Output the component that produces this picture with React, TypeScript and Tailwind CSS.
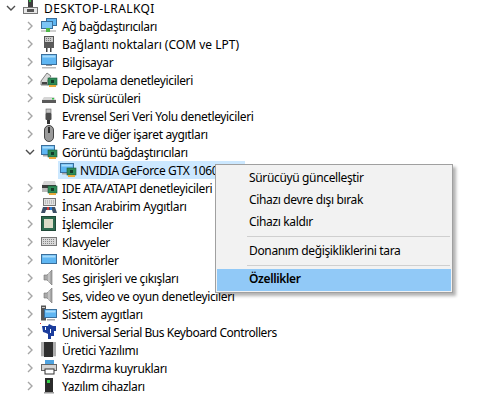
import React from "react";

const Card = ({ x = 8, y = 7 }: { x?: number; y?: number }) => (
  <g transform={`translate(${x} ${y})`}>
    <rect x="0" y="0" width="9" height="7" fill="#2e8b57" stroke="#1d5c3a" strokeWidth="0.6" />
    <rect x="3" y="2" width="3" height="3" fill="#123c28" />
    <rect x="1" y="7" width="7" height="2" fill="#e8a93a" />
  </g>
);

const Monitor = ({ x = 1, y = 2, w = 14, h = 9 }: { x?: number; y?: number; w?: number; h?: number }) => (
  <g>
    <rect x={x} y={y} width={w} height={h} fill="#5fb6f2" stroke="#3b6f9c" />
    <rect x={x + 1} y={y + 1} width={w - 2} height={2} fill="#a8dcfb" />
  </g>
);

const Svg = ({ children }: { children: React.ReactNode }) => (
  <svg width="18" height="18" viewBox="0 0 18 18" className="shrink-0">
    {children}
  </svg>
);

const icons: Record<string, React.ReactNode> = {
  computer: (
    <Svg>
      <rect x="6" y="0" width="5" height="8" fill="#3f3f3f" />
      <rect x="7" y="1" width="2" height="2" fill="#39b54a" />
      <rect x="1.5" y="8.5" width="14" height="6" fill="#e6e6e6" stroke="#777" />
      <rect x="5" y="10" width="7" height="3" fill="#555" />
    </Svg>
  ),
  network: (
    <Svg>
      <rect x="6.5" y="1.5" width="10" height="7" fill="#5fb6f2" stroke="#3b6f9c" />
      <rect x="1.5" y="4.5" width="11" height="7" fill="#7cc6f7" stroke="#3b6f9c" />
      <rect x="1" y="13" width="15" height="2" fill="#cfcfcf" />
      <rect x="6" y="11" width="4" height="4" fill="#4fb848" />
    </Svg>
  ),
  port: (
    <Svg>
      <rect x="4.5" y="1.5" width="9" height="6" fill="#c9c9c9" stroke="#555" />
      <path d="M6 3.5 H12 M6 5.5 H12" stroke="#777" strokeDasharray="1 1" />
      <rect x="4" y="8" width="10" height="5" fill="#5a5a5a" />
      <rect x="6" y="13" width="1.5" height="4" fill="#444" />
      <rect x="10" y="13" width="1.5" height="4" fill="#444" />
    </Svg>
  ),
  pc: (
    <Svg>
      <Monitor x={1.5} y={1.5} w={15} h={10} />
      <rect x="6" y="12" width="6" height="1" fill="#999" />
      <rect x="2" y="14" width="14" height="1.5" fill="#bbb" />
    </Svg>
  ),
  storage: (
    <Svg>
      <path d="M1 10 L7 2 L11 5 L8 9 L8 14 L1 14 Z" fill="#d9d9d9" stroke="#666" strokeWidth="0.8" />
      <rect x="2" y="11" width="5" height="2.5" fill="#444" />
      <Card x={8} y={7} />
    </Svg>
  ),
  disk: (
    <Svg>
      <path d="M4 8 H14 L16 11 H2 Z" fill="#d6d6d6" />
      <rect x="2" y="11" width="14" height="3" fill="#5a5a5a" />
      <rect x="12" y="9" width="2" height="1.5" fill="#35c24a" />
    </Svg>
  ),
  usb: (
    <Svg>
      <rect x="6" y="2" width="5" height="4" fill="#c4c4c4" stroke="#666" strokeWidth="0.6" />
      <rect x="5.5" y="6" width="6" height="7" rx="1" fill="#4d4d4d" />
      <rect x="7" y="13" width="3" height="4" fill="#333" />
    </Svg>
  ),
  mouse: (
    <Svg>
      <rect x="4.5" y="0.5" width="9" height="16" rx="4.5" fill="#9a9a9a" stroke="#444" />
      <rect x="8" y="2" width="2" height="6" fill="#2c2c2c" />
    </Svg>
  ),
  display: (
    <Svg>
      <Monitor x={1.5} y={2.5} w={13} h={9} />
      <rect x="3" y="12" width="8" height="1.5" fill="#aaa" />
      <Card x={8} y={7} />
    </Svg>
  ),
  ide: (
    <Svg>
      <path d="M4 2 H15 L16 6 H2 Z" fill="#d5d5d5" />
      <rect x="2" y="6" width="14" height="3" fill="#3c3c3c" />
      <rect x="2" y="9" width="6" height="4" fill="#bbb" />
      <Card x={8} y={7} />
    </Svg>
  ),
  hid: (
    <Svg>
      <rect x="3.5" y="1.5" width="12" height="7" fill="#e2e2e2" stroke="#777" />
      <path d="M5 4 H14 M5 6 H14" stroke="#999" strokeDasharray="1 1" />
      <path d="M1 16 L3 10 H15 L17 16 H13 L12 13 H6 L5 16 Z" fill="#3d4f66" />
      <rect x="7" y="10" width="2" height="3" fill="#d23b3b" />
      <rect x="10" y="10" width="2" height="3" fill="#2f7ed8" />
    </Svg>
  ),
  cpu: (
    <Svg>
      <rect x="1.5" y="1.5" width="14" height="14" fill="#2d6a4f" stroke="#1f4937" />
      <rect x="4" y="4" width="9" height="9" fill="#dcdcc8" />
    </Svg>
  ),
  keyboard: (
    <Svg>
      <rect x="1.5" y="4.5" width="15" height="8" fill="#d9d9d9" stroke="#777" />
      <path d="M3 6.5 H15 M3 8.5 H15 M3 10.5 H15" stroke="#888" strokeDasharray="1 1" />
    </Svg>
  ),
  monitor: (
    <Svg>
      <Monitor x={1.5} y={3.5} w={15} h={9} />
    </Svg>
  ),
  speaker: (
    <Svg>
      <path d="M4 6 H7 L12 1 V16 L7 11 H4 Z" fill="#a9a9a9" stroke="#6f6f6f" strokeWidth="0.6" />
      <path d="M9 3.5 V13.5" stroke="#dcdcdc" />
    </Svg>
  ),
  system: (
    <Svg>
      <rect x="1" y="0.5" width="5" height="15" fill="#555" />
      <rect x="2" y="2" width="3" height="1" fill="#ccc" />
      <Monitor x={4.5} y={4.5} w={12} h={8} />
      <rect x="7" y="14" width="8" height="1.5" fill="#aaa" />
    </Svg>
  ),
  serial: (
    <Svg>
      <path d="M2 3 H8 L9 1 L13 3 L16 3 V8 L14 8 V13 H11 V16 H8 V11 L6 10 L3 9 Z" fill="#1b3c9c" />
      <rect x="5" y="4" width="1" height="3" fill="#fff" />
      <rect x="10" y="6" width="1" height="4" fill="#fff" />
      <rect x="0" y="0" width="1" height="1" fill="#e03030" />
    </Svg>
  ),
  chip: (
    <Svg>
      <rect x="1" y="1" width="15" height="15" fill="#e8e8e8" />
      <path d="M1 2 H16 M1 4 H16 M1 6 H16 M1 8 H16 M1 10 H16 M1 12 H16 M1 14 H16" stroke="#555" strokeWidth="0.8" />
      <rect x="4" y="1" width="9" height="15" fill="#2f2f2f" />
    </Svg>
  ),
  printer: (
    <Svg>
      <rect x="5" y="1" width="9" height="4" fill="#4fa3e0" />
      <rect x="1.5" y="5.5" width="15" height="6" fill="#d4d4d4" stroke="#666" />
      <rect x="5" y="10" width="9" height="5" fill="#fff" stroke="#333" />
    </Svg>
  ),
  software: (
    <Svg>
      <rect x="5" y="1" width="8" height="15" fill="#2b2b2b" />
      <rect x="7" y="3" width="3" height="3" fill="#35d14a" />
      <rect x="4" y="15" width="10" height="1.5" fill="#999" />
    </Svg>
  ),
};

type Row = { label: string; icon: string; open?: boolean; level: number; tracking?: string };

const rows: Row[] = [
  { label: "DESKTOP-LRALKQI", icon: "computer", open: true, level: 0, tracking: "tracking-[0.4px]" },
  { label: "Ağ bağdaştırıcıları", icon: "network", level: 1 },
  { label: "Bağlantı noktaları (COM ve LPT)", icon: "port", level: 1, tracking: "tracking-[0px]" },
  { label: "Bilgisayar", icon: "pc", level: 1 },
  { label: "Depolama denetleyicileri", icon: "storage", level: 1 },
  { label: "Disk sürücüleri", icon: "disk", level: 1 },
  { label: "Evrensel Seri Veri Yolu denetleyicileri", icon: "usb", level: 1 },
  { label: "Fare ve diğer işaret aygıtları", icon: "mouse", level: 1 },
  { label: "Görüntü bağdaştırıcıları", icon: "display", open: true, level: 1 },
  { label: "NVIDIA GeForce GTX 1060 6GB", icon: "display", level: 2 },
  { label: "IDE ATA/ATAPI denetleyicileri", icon: "ide", level: 1 },
  { label: "İnsan Arabirim Aygıtları", icon: "hid", level: 1 },
  { label: "İşlemciler", icon: "cpu", level: 1 },
  { label: "Klavyeler", icon: "keyboard", level: 1 },
  { label: "Monitörler", icon: "monitor", level: 1 },
  { label: "Ses girişleri ve çıkışları", icon: "speaker", level: 1 },
  { label: "Ses, video ve oyun denetleyicileri", icon: "speaker", level: 1 },
  { label: "Sistem aygıtları", icon: "system", level: 1 },
  { label: "Universal Serial Bus Keyboard Controllers", icon: "serial", level: 1, tracking: "tracking-[-0.45px]" },
  { label: "Üretici Yazılımı", icon: "chip", level: 1 },
  { label: "Yazdırma kuyrukları", icon: "printer", level: 1 },
  { label: "Yazılım cihazları", icon: "software", level: 1 },
];

function Chevron({ open }: { open?: boolean }) {
  return (
    <svg width="10" height="10" viewBox="0 0 10 10" className="shrink-0">
      {open ? (
        <path d="M1 3 L5 7 L9 3" fill="none" stroke="#4d4d4d" strokeWidth="1.4" />
      ) : (
        <path d="M3 1 L7 5 L3 9" fill="none" stroke="#a6a6a6" strokeWidth="1.4" />
      )}
    </svg>
  );
}

function TreeRow({ row }: { row: Row }) {
  if (row.level === 2) {
    return (
      <div className="flex h-[18px] items-center pl-[58px]">
        <div className="flex h-[18px] w-[187px] items-center gap-[3px] bg-[#cce8ff] pl-px whitespace-nowrap">
          {icons[row.icon]}
          <span className="pt-px">{row.label}</span>
        </div>
      </div>
    );
  }
  return (
    <div className={`flex h-[18px] items-center whitespace-nowrap ${row.level === 0 ? "pl-[6px]" : "pl-[25px]"}`}>
      <Chevron open={row.open} />
      <div className={`flex items-center gap-[4px] ${row.level === 0 ? "ml-[6px]" : "ml-[5px]"}`}>
        {icons[row.icon]}
        <span className={`pt-px ${row.tracking ?? ""}`}>{row.label}</span>
      </div>
    </div>
  );
}

function ContextMenu() {
  const item = "flex h-[22px] items-center pl-[32px]";
  return (
    <div className="absolute left-[215px] top-[164px] w-[238px] h-[129px] border border-[#a0a0a0] bg-[#f2f2f2] p-[1px] shadow-[3px_3px_3px_rgba(0,0,0,0.3)]">
      <div className={`${item} mt-[1px]`}>Sürücüyü güncelleştir</div>
      <div className={item}>Cihazı devre dışı bırak</div>
      <div className={item}>Cihazı kaldır</div>
      <div className="mx-[30px] mr-[1px] mt-[3px] mb-[3px] h-px bg-[#cfcfcf]" />
      <div className={item}>Donanım değişikliklerini tara</div>
      <div className="mx-[30px] mr-[1px] mt-[3px] mb-[3px] h-px bg-[#cfcfcf]" />
      <div className={`${item} bg-[#91c9f7] pb-[2px] font-semibold`}>Özellikler</div>
    </div>
  );
}

export default function App() {
  return (
    <div className="relative h-[403px] w-[497px] overflow-hidden bg-white font-['Noto_Sans','Open_Sans',sans-serif] text-[12px] tracking-[-0.35px] text-black">
      <div className="-mt-px flex flex-col">
        {rows.map((row) => (
          <TreeRow key={row.label} row={row} />
        ))}
      </div>
      <ContextMenu />
    </div>
  );
}
